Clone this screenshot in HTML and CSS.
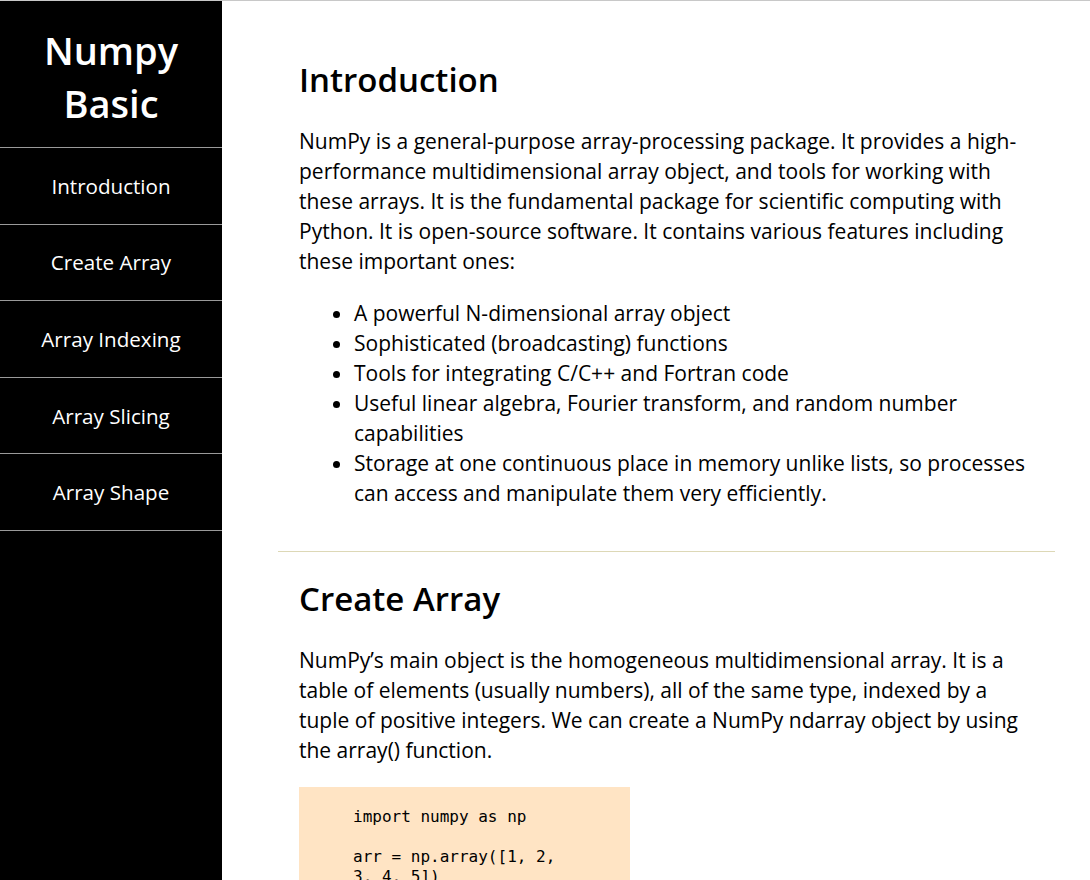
FILE: index.html
```html
<!DOCTYPE html>
<html lang="en">
<head>
<meta charset="utf-8">
<title>Numpy Basic</title>
<link rel="stylesheet" href="styles.css">
</head>
<body>
<div class="page">
  <nav class="sidebar">
    <header class="brand">Numpy Basic</header>
    <ul class="nav-list">
      <li class="nav-item"><a class="nav-link" href="#introduction">Introduction</a></li>
      <li class="nav-item"><a class="nav-link" href="#create_array">Create Array</a></li>
      <li class="nav-item"><a class="nav-link" href="#array_indexing">Array Indexing</a></li>
      <li class="nav-item"><a class="nav-link" href="#array_slicing">Array Slicing</a></li>
      <li class="nav-item"><a class="nav-link" href="#array_shape">Array Shape</a></li>
    </ul>
  </nav>
  <main class="main">
    <section class="section" id="introduction">
      <h2 class="section-title">Introduction</h2>
      <p class="text">NumPy is a general-purpose array-processing package. It provides a high-performance multidimensional array object, and tools for working with these arrays. It is the fundamental package for scientific computing with Python. It is open-source software. It contains various features including these important ones:</p>
      <ul class="bullets">
        <li>A powerful N-dimensional array object</li>
        <li>Sophisticated (broadcasting) functions</li>
        <li>Tools for integrating C/C++ and Fortran code</li>
        <li>Useful linear algebra, Fourier transform, and random number capabilities</li>
        <li>Storage at one continuous place in memory unlike lists, so processes can access and manipulate them very efficiently.</li>
      </ul>
    </section>
    <section class="section" id="create_array">
      <h2 class="section-title">Create Array</h2>
      <p class="text">NumPy’s main object is the homogeneous multidimensional array. It is a table of elements (usually numbers), all of the same type, indexed by a tuple of positive integers. We can create a NumPy ndarray object by using the array() function.</p>
      <pre class="code"><code>import numpy as np

arr = np.array([1, 2, 3, 4, 5])

print(arr)

print(type(arr))</code></pre>
    </section>
  </main>
</div>
</body>
</html>
```

FILE: styles.css
```css
html, body {
  margin: 0;
  padding: 0;
}
body {
  font-family: "Open Sans", "Noto Sans", sans-serif;
  color: #000;
  background: #fff;
  border-top: 1px solid #c8c8c8;
}
.page {
  display: flex;
  align-items: flex-start;
}
.sidebar {
  width: 222px;
  flex: none;
  background: #000;
  color: #fff;
  min-height: 100vh;
  position: sticky;
  top: 0;
}
.brand {
  font-size: 38px;
  font-weight: 600;
  line-height: 53px;
  text-align: center;
  padding: 23px 30px 17px;
  border-bottom: 1px solid #9a9a9a;
}
.nav-list {
  list-style: none;
  margin: 0;
  padding: 0;
}
.nav-item {
  border-bottom: 1px solid #9a9a9a;
}
.nav-link {
  display: block;
  color: #fff;
  text-decoration: none;
  text-align: center;
  font-size: 20.6px;
  line-height: 30px;
  padding: 22.8px 0;
}
.main {
  flex: 1;
  margin: 0 35px 0 56px;
  padding-top: 32px;
}
.section {
  padding: 25px 21px 1px;
  border-bottom: 1px solid #ddd8b6;
}
.section-title {
  margin: 0 0 24px;
  font-size: 33px;
  line-height: 44px;
  font-weight: 600;
}
.text {
  margin: 0 0 22px;
  font-size: 21px;
  line-height: 30px;
}
.bullets {
  margin: 0 0 42px;
  padding-left: 55px;
  font-size: 21px;
  line-height: 30px;
}
.code {
  margin: 16px 0 0;
  width: 223px;
  padding: 20px 54px;
  background: #ffe4c4;
  font-family: "DejaVu Sans Mono", monospace;
  font-size: 16px;
  line-height: 20px;
  white-space: pre-wrap;
}
```
